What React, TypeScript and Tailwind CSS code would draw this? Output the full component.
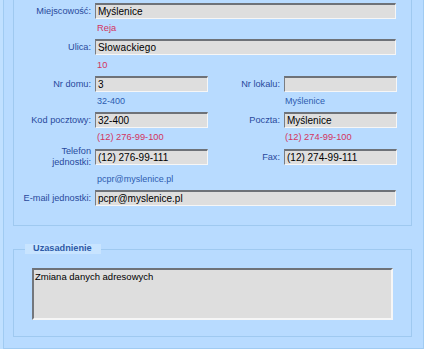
import React from "react";

const LBL = "text-[9.2px] leading-[11px] text-[#28499c] text-right shrink-0";
const HINT_BLUE = "text-[9px] leading-none text-[#2d5cb0]";
const HINT_RED = "text-[9.3px] leading-none text-[#d3345e]";

function Field({ w, children }: { w: number; children?: React.ReactNode }) {
  return (
    <div
      className="h-[16px] bg-[#dedede] border-t-2 border-t-[#6e7278] border-l border-l-[#7a7d82] border-r border-r-[#f6f6f6] border-b border-b-[#f6f6f6] pl-[2px] flex items-center text-[10px] text-black whitespace-nowrap overflow-hidden shrink-0"
      style={{ width: w }}
    >
      {children}
    </div>
  );
}

export default function App() {
  return (
    <div className="w-[424px] h-[349px] bg-[#c0e0ff] font-['Liberation_Sans',Arial,sans-serif] overflow-hidden">
      <div className="ml-[3px] w-[421px] h-[349px] bg-[#b8dbff] border-l border-r border-b border-[#a0cbf2] pl-[9px] pr-[11px] pb-[11px] flex flex-col">
        {/* Group 1 */}
        <div className="w-[399px] h-[226px] border-l border-r border-b border-[#9fc9f0] pt-[3px] flex flex-col">
          {/* Row 1 */}
          <div className="h-[16px] flex items-center">
            <div className={`${LBL} w-[77px]`}>Miejscowość:</div>
            <div className="ml-[4px]"><Field w={301}>Myślenice</Field></div>
          </div>
          <div className="h-[20px] flex items-center pl-[83px]">
            <span className={HINT_RED}>Reja</span>
          </div>
          {/* Row 2 */}
          <div className="h-[16px] flex items-center">
            <div className={`${LBL} w-[77px]`}>Ulica:</div>
            <div className="ml-[4px]"><Field w={301}><span className="tracking-[0.2px]">Słowackiego</span></Field></div>
          </div>
          <div className="h-[21px] flex items-center pl-[83px]">
            <span className={HINT_RED}>10</span>
          </div>
          {/* Row 3 */}
          <div className="h-[16px] flex items-center">
            <div className={`${LBL} w-[77px]`}>Nr domu:</div>
            <div className="ml-[4px]"><Field w={113}>3</Field></div>
            <div className={`${LBL} w-[72px]`}>Nr lokalu:</div>
            <div className="ml-[4px]"><Field w={113} /></div>
          </div>
          <div className="h-[18px] flex items-center">
            <span className={`${HINT_BLUE} ml-[83px] w-[188px]`}>32-400</span>
            <span className={HINT_BLUE}>Myślenice</span>
          </div>
          {/* Row 4 */}
          <div className="mt-[2px] h-[16px] flex items-center">
            <div className={`${LBL} w-[77px]`}>Kod pocztowy:</div>
            <div className="ml-[4px]"><Field w={113}>32-400</Field></div>
            <div className={`${LBL} w-[72px]`}>Poczta:</div>
            <div className="ml-[4px]"><Field w={113}>Myślenice</Field></div>
          </div>
          <div className="h-[19px] flex items-center">
            <span className={`${HINT_RED} ml-[83px] w-[188px]`}>(12) 276-99-100</span>
            <span className={HINT_RED}>(12) 274-99-100</span>
          </div>
          {/* Row 5 */}
          <div className="mt-[2px] h-[16px] flex items-center">
            <div className={`${LBL} w-[77px]`}>
              Telefon
              <br />
              jednostki:
            </div>
            <div className="ml-[4px]"><Field w={113}>(12) 276-99-111</Field></div>
            <div className={`${LBL} w-[72px]`}>Fax:</div>
            <div className="ml-[4px]"><Field w={113}>(12) 274-99-111</Field></div>
          </div>
          <div className="h-[25px] flex items-center pt-[3px]">
            <span className={`${HINT_BLUE} ml-[83px]`}>pcpr@myslenice.pl</span>
          </div>
          {/* Row 6 */}
          <div className="h-[16px] flex items-center">
            <div className={`${LBL} w-[77px]`}>E-mail jednostki:</div>
            <div className="ml-[4px]"><Field w={301}>pcpr@myslenice.pl</Field></div>
          </div>
        </div>

        {/* Group 2 */}
        <div className="relative mt-[23px] w-[399px] h-[88px] border border-[#9fc9f0] pt-[18px] pl-[18px]">
          <div className="absolute left-[11px] top-[-6px] w-[76px] h-[10px] bg-[#c8e4ff] pl-[8px] flex items-center">
            <span className="text-[9.2px] leading-none font-bold text-[#2c5aa8]">Uzasadnienie</span>
          </div>
          <div className="w-[361px] h-[52px] bg-[#dedede] border-t-2 border-t-[#6e7278] border-l-2 border-l-[#74777c] border-r-2 border-r-[#f6f6f6] border-b-2 border-b-[#f6f6f6] pl-[1px] pt-[1px] text-[9.5px] leading-[12px] text-black">
            Zmiana danych adresowych
          </div>
        </div>
      </div>
    </div>
  );
}
